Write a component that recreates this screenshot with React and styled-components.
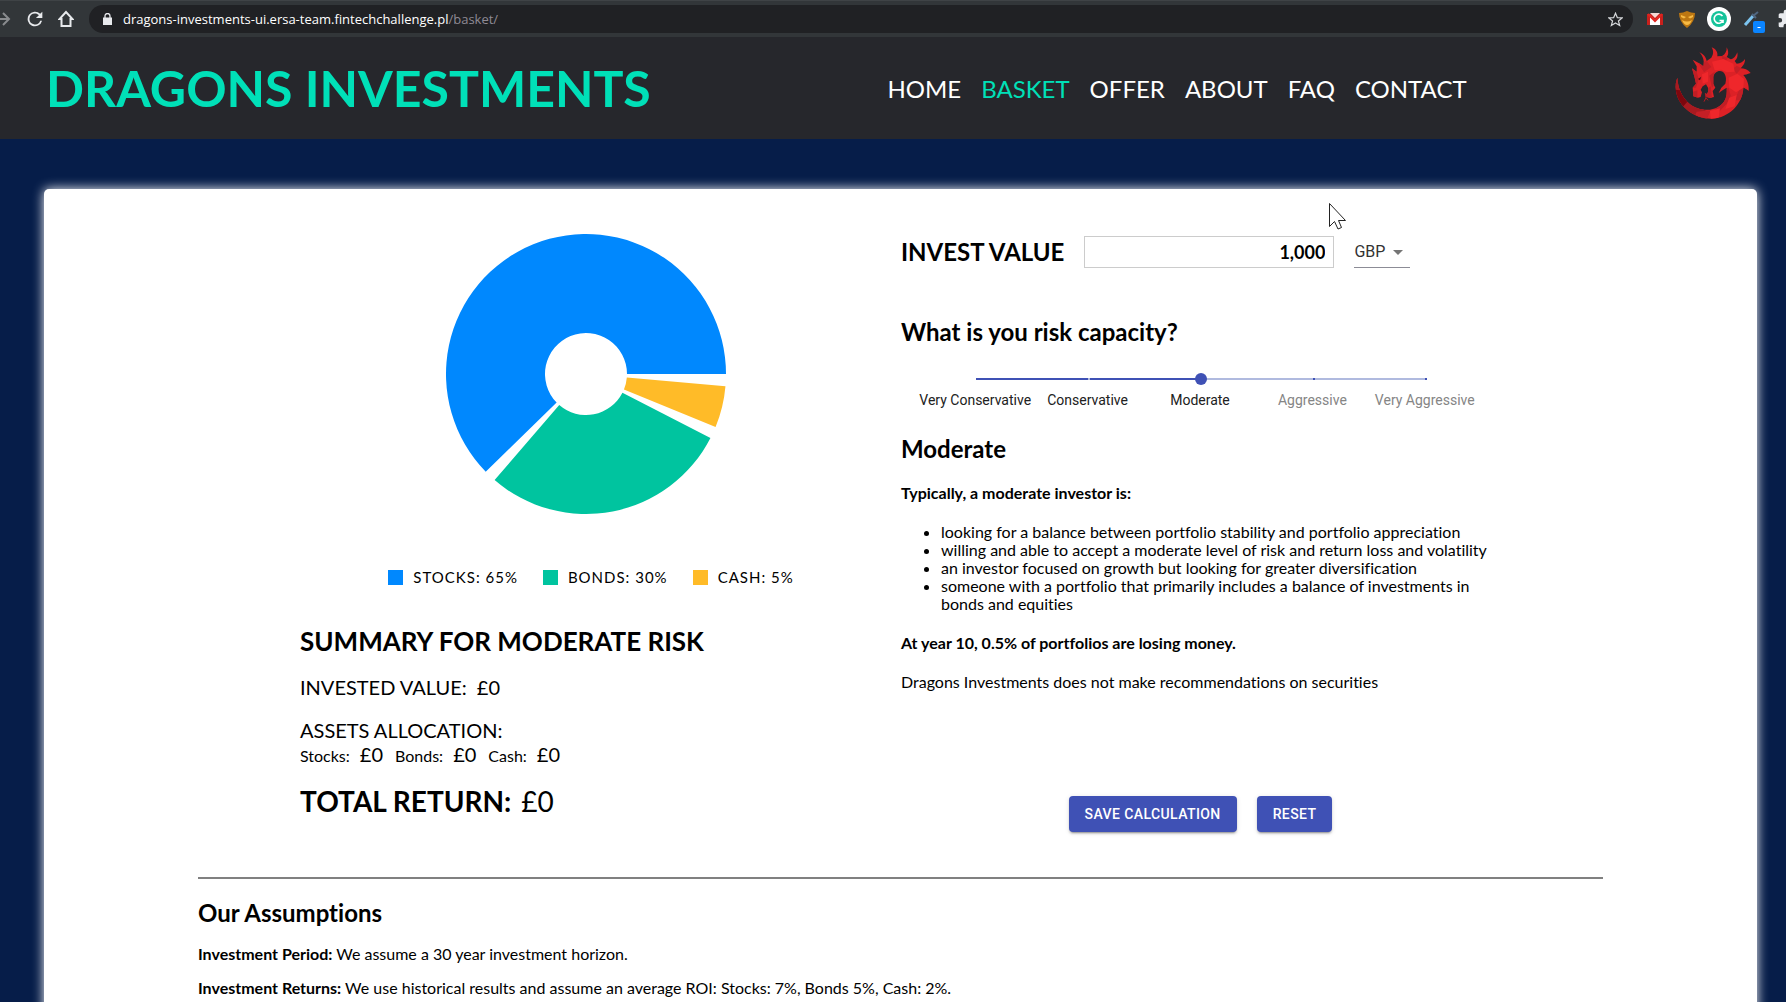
import React from 'react';
import styled, { createGlobalStyle } from 'styled-components';

const Global = createGlobalStyle`
  *, *::before, *::after { box-sizing: border-box; }
  body {
    margin: 0; font-family: Lato, "Noto Sans", sans-serif; font-size: 16px; color: #000; background: #061d49;
    font-variant-ligatures: none;
  }
  h1, h2, h3, p, ul { margin: 0; font-weight: 400; }
`;

const Bar = styled.div`
  display: flex; align-items: center; height: 37px; overflow: hidden;
  background: #323639; border-top: 1px solid #3f4346; color: #e8eaed;
`;
const NavButtons = styled.div`
  display: flex; align-items: center; gap: 12px; width: 89px; flex: none;
`;
const IconButton = styled.button`
  display: flex; align-items: center; justify-content: center; flex: none;
  width: ${(p) => p.$w || 20}px; height: 28px; padding: 0; border: 0; background: none; color: inherit;
`;
const Address = styled.div`
  display: flex; align-items: center; gap: 11px; flex: 1; height: 28px;
  padding: 0 10px 0 14px; border-radius: 14px; background: #202124;
`;
const Url = styled.span`
  flex: 1; font: 13px/20px "Open Sans", "Noto Sans", sans-serif; color: #fff;
`;
const UrlPath = styled.span`color: #8f8a94;`;
const Extensions = styled.div`
  display: flex; align-items: center; gap: 8px; width: 153px; padding-left: 10px; flex: none; overflow: hidden;
`;

const Header = styled.header`
  display: flex; align-items: center; height: 102px; padding: 0 35px 0 46px; background: #26272c;
`;
const Brand = styled.h1`
  flex: 0 0 49%; font-size: 50px; line-height: 60px; font-weight: 700; color: #00e0b8; white-space: nowrap;
`;
const Nav = styled.nav`display: flex; gap: 20px; flex: 1; padding: 2px 0 0 6px;`;
const NavLink = styled.a`
  font-size: 24px; line-height: 30px; text-decoration: none; color: ${(p) => (p.$active ? '#00e0b8' : '#fff')};
`;
const Logo = styled.svg`flex: none; align-self: flex-start; margin-top: 10px;`;

const Card = styled.main`
  margin: 50px 29px 0 44px; padding: 45px 154px 0; background: #fff;
  border-radius: 5px 5px 0 0; box-shadow: 0 0 12px #fff;
`;
const Columns = styled.div`
  display: grid; grid-template-columns: 600px minmax(0, 1fr); padding-left: 102px;
  padding-bottom: 45px; border-bottom: 2px solid #808080;
`;
const Left = styled.section`display: flex; flex-direction: column;`;
const Chart = styled.figure`
  display: flex; flex-direction: column; align-items: center; gap: 51px; margin: 0; padding-right: 28px;
`;
const Legend = styled.figcaption`
  display: flex; gap: 25px; padding-left: 10px; font-size: 15px; line-height: 24px; letter-spacing: 1px;
`;
const LegendItem = styled.span`
  display: flex; align-items: center; gap: 10px;
  &::before { content: ''; width: 15px; height: 15px; background: ${(p) => p.$color}; }
`;
const Summary = styled.div`padding: 36px 0 14px;`;
const Title = styled.h2`font-size: 26px; line-height: 32px; font-weight: 700;`;
const Line = styled.p`
  font-size: ${(p) => p.$size || 20}px; line-height: ${(p) => p.$lh || 24}px; padding-top: ${(p) => p.$top || 0}px;
  font-weight: ${(p) => (p.$bold ? 700 : 400)};
`;
const Amount = styled.span`font-size: ${(p) => p.$size || 20}px; font-weight: 400; margin: 0 12px 0 10px;`;

const Right = styled.section`display: flex; flex-direction: column; max-width: 600px; padding-left: 1px;`;
const InvestRow = styled.div`display: flex; align-items: center; gap: 20px; padding-top: 2px; margin-bottom: 48px;`;
const InvestLabel = styled.label`font-size: 24px; line-height: 32px; font-weight: 700;`;
const ValueInput = styled.input`
  width: 250px; height: 32px; padding: 0 8px; border: 1px solid #ccc; outline: 0; text-align: right;
  font: 700 18px/24px Lato, sans-serif; color: #000;
`;
const SelectWrap = styled.div`
  position: relative; width: 56px; border-bottom: 1px solid #8c8c96;
  &::after {
    content: ''; position: absolute; right: 7px; top: 14px; pointer-events: none;
    border: 5px solid transparent; border-top-color: #757575; border-bottom: 0;
  }
`;
const Currency = styled.select`
  appearance: none; width: 100%; height: 31px; padding: 0; border: 0; background: none; outline: 0;
  font: 16px/24px Roboto, sans-serif; color: #333;
`;
const Heading = styled.h2`font-size: 24px; line-height: 32px; font-weight: 700;`;
const Risk = styled.div`padding: 25px 0 23px 18px;`;
const Range = styled.input`
  display: block; appearance: none; width: 462px; height: 12px; margin: 0 0 0 51px; background:
    linear-gradient(#b0badf, #b0badf) 118px 5px / 2px 2px no-repeat,
    linear-gradient(#3f51b5, #3f51b5) 343px 5px / 2px 2px no-repeat,
    linear-gradient(#3f51b5, #3f51b5) 455px 5px / 2px 2px no-repeat,
    linear-gradient(90deg, #3f51b5 50%, #b0badf 50%) 6px 5px / 450px 2px no-repeat;
  &::-webkit-slider-thumb { appearance: none; width: 12px; height: 12px; border-radius: 50%; background: #3f51b5; }
`;
const Marks = styled.div`
  display: grid; grid-template-columns: repeat(5, 1fr); width: 562px; padding-top: 5px;
  font: 14px/20px Roboto, sans-serif; text-align: center; white-space: nowrap;
`;
const Mark = styled.span`color: ${(p) => (p.$off ? '#858585' : '#212121')};`;
const Copy = styled.p`font-size: 16px; line-height: 18px; padding-top: ${(p) => p.$top || 21}px; font-weight: ${(p) => (p.$bold ? 700 : 400)};`;
const Traits = styled.ul`
  padding: 21px 0 0 40px; font-size: 16px; line-height: 18px;
`;
const Actions = styled.div`display: flex; justify-content: center; gap: 20px; margin-top: auto;`;
const Button = styled.button`
  height: 36px; padding: 0 16px; border: 0; border-radius: 4px; background: #3f51b5; color: #fff;
  font: 500 14px/24px Roboto, sans-serif; letter-spacing: 0.4px;
  box-shadow: 0 3px 1px -2px rgba(0,0,0,.2), 0 2px 2px rgba(0,0,0,.14), 0 1px 5px rgba(0,0,0,.12);
`;
const Assumptions = styled.section`
  display: flex; flex-direction: column; gap: 16px; padding: 18px 0 40px;
`;
const Assumption = styled.p`font-size: 16px; line-height: 18px;`;

const Cursor = styled.svg`position: absolute; left: 1328px; top: 202px; pointer-events: none;`;

const DATA = [
  { name: 'STOCKS', value: 65, color: '#0088fe' },
  { name: 'BONDS', value: 30, color: '#00c49f' },
  { name: 'CASH', value: 5, color: '#ffbb28' },
];

function point(r, deg) {
  const a = (deg * Math.PI) / 180;
  return `${140 + r * Math.cos(a)} ${140 - r * Math.sin(a)}`;
}

function Pie() {
  const pad = 5;
  let start = 0;
  return (
    <svg width="280" height="280" viewBox="0 0 280 280" role="img" aria-label="Portfolio allocation">
      {DATA.map((d) => {
        const sweep = ((360 - pad * DATA.length) * d.value) / 100;
        const end = start + sweep;
        const large = sweep > 180 ? 1 : 0;
        const path = `M${point(140, start)} A140 140 0 ${large} 0 ${point(140, end)} L${point(41, end)} A41 41 0 ${large} 1 ${point(41, start)} Z`;
        start = end + pad;
        return <path key={d.name} d={path} fill={d.color} />;
      })}
    </svg>
  );
}

const DRAGON_BODY =
  'M292 232C294 262 304 290 330 312C352 330 392 334 414 320C434 308 442 292 440 262L430 268L416 278L424 262L436 250C440 236 438 222 428 214C416 208 402 216 400 230L400 250L406 262L398 272L402 290L390 293L380 290L376 284L384 276L384 262L378 252L368 258L362 268L366 276L362 290L354 292L340 288L338 262L348 250L344 232L336 204L350 214L350 198L338 178L360 190L370 198C374 184 370 168 358 156C372 162 378 172 380 182L394 172C402 160 400 150 395 141C408 146 414 156 412 168L426 167C436 162 441 152 440 141C446 152 446 164 440 170L452 177C462 176 468 166 472 156C474 168 472 176 464 182L470 190C482 190 490 184 495 176C496 188 488 198 482 204C492 204 504 208 512 218C502 222 494 224 490 224C500 236 508 252 506 272C500 266 494 262 490 262C488 310 448 352 396 355C346 356 296 322 288 272C285 254 288 242 292 232Z';

function Dragon() {
  return (
    <Logo width="76" height="72" viewBox="285 140 228 216" role="img" aria-label="Dragon logo">
      <clipPath id="dragon-body"><path d={DRAGON_BODY} /></clipPath>
      <path fill="#dc2126" d={DRAGON_BODY} />
      <g clipPath="url(#dragon-body)">
        <path fill="#c01e25" d="M334 200L350 214L356 236L348 262L336 262ZM388 226L404 214L404 250L396 262ZM336 276L352 270L352 294L336 294ZM384 264L392 258L396 294L376 292Z" />
        <path fill="#a81a20" d="M284 226L300 226L340 312L380 332L362 358L312 336L284 280Z" />
        <path fill="#c01e25" d="M430 270L446 262L452 286L440 310L416 336L404 326L432 304Z" />
        <path fill="#7d070e" d="M284 268L300 270L322 304L306 322L288 296Z" />
        <path fill="#c41f26" d="M356 190L380 182L394 200L372 216ZM424 166L444 172L432 190ZM470 196L484 204L470 220L458 206ZM480 262L500 262L486 300L464 300ZM350 334L392 330L380 358L342 352Z" />
        <path fill="#ef272b" d="M396 184L430 176L460 190L464 214L440 216L424 208L404 210ZM446 232L472 220L492 236L490 262L468 276L448 262ZM448 292L470 284L464 318L436 326ZM390 332L420 324L416 352L392 356ZM366 222L384 214L384 244L368 250Z" />
        <path fill="#4e0d13" d="M354 236L364 229L360 240Z" />
      </g>
      <path fill="none" stroke="#b01c23" strokeWidth="3" d="M376 278L378 292L372 304M378 292L384 300" />
    </Logo>
  );
}

export default function App() {
  return (
    <>
      <Global />
      <Bar>
        <NavButtons>
          <IconButton aria-label="Forward" $w={12}>
            <svg width="12" height="16" viewBox="0 0 12 16" fill="none" stroke="#898b8e" strokeWidth="2"><path d="M0 8H9M3 2L9 8L3 14" /></svg>
          </IconButton>
          <IconButton aria-label="Reload" $w={22}>
            <svg width="22" height="22" viewBox="0 0 24 24" fill="currentColor"><path d="M17.65 6.35A8 8 0 1 0 19.73 14h-2.08A6 6 0 1 1 12 6c1.66 0 3.14.69 4.22 1.78L13 11h7V4z" /></svg>
          </IconButton>
          <IconButton aria-label="Home" $w={16}>
            <svg width="16" height="18" viewBox="0 0 16 18" fill="none" stroke="currentColor" strokeWidth="2"><path d="M8 2L1.500 9H3.500V16H12.500V9H14.500Z" /></svg>
          </IconButton>
        </NavButtons>
        <Address>
          <svg width="9" height="12" viewBox="0 0 9 12"><path d="M0 4.500H9V12H0Z" fill="#e8eaed" /><path d="M2 5V3A2.500 2.500 0 0 1 7 3V5" fill="none" stroke="#e8eaed" strokeWidth="1.300" /></svg>
          <Url>dragons-investments-ui.ersa-team.fintechchallenge.pl<UrlPath>/basket/</UrlPath></Url>
          <IconButton aria-label="Bookmark" $w={16}>
            <svg width="15" height="15" viewBox="0 0 24 24" fill="none" stroke="#d5d7da" strokeWidth="2"><path d="M12 2L15 9L22.500 9.500L16.700 14.300L18.600 21.500L12 17.500L5.400 21.500L7.300 14.300L1.500 9.500L9 9Z" /></svg>
          </IconButton>
        </Address>
        <Extensions>
          <IconButton aria-label="Mail" $w={24}>
            <svg width="16" height="13" viewBox="0 0 16 13"><path d="M0 1H16V12H0Z" fill="#c9201c" /><path d="M3 2L8 7L13 2V12H3Z" fill="#fff" /><path d="M3 0H13L8 5Z" fill="#f6d9d5" /><path d="M1 1L8 8L15 1" fill="none" stroke="#e0231f" strokeWidth="2" /></svg>
          </IconButton>
          <IconButton aria-label="Mask" $w={24}>
            <svg width="16" height="17" viewBox="0 0 16 17"><path d="M0 2Q4 2 8 0Q12 2 16 2Q16 11 8 17Q0 11 0 2Z" fill="#bd7712" /><path d="M2 4L7 6L5 7.500L2 6ZM14 4L9 6L11 7.500L14 6ZM3 9Q8 12 13 9Q11 14 8 14Q5 14 3 9Z" fill="#f8ba43" /></svg>
          </IconButton>
          <IconButton aria-label="Writing assistant" $w={24}>
            <svg width="24" height="24" viewBox="0 0 24 24"><circle cx="12" cy="12" r="12" fill="#fff" /><circle cx="12" cy="12" r="8" fill="#15c39a" /><path d="M15.500 9A4.600 4.600 0 1 0 16 13.500H12.500M16 13V16" fill="none" stroke="#fff" strokeWidth="1.600" /></svg>
          </IconButton>
          <IconButton aria-label="Colour picker" $w={30}>
            <svg width="22" height="28" viewBox="0 0 22 28"><path d="M2 20L10 11" stroke="#7cc4f0" strokeWidth="3" /><path d="M9 9L13 13M10 11L15 7" stroke="#506680" strokeWidth="2" /><rect x="10" y="16" width="12" height="12" rx="2" fill="#0a84ff" /><path d="M14.500 22.500H17.500" stroke="#fff" /></svg>
          </IconButton>
          <IconButton aria-label="Extensions" $w={20}>
            <svg width="20" height="20" viewBox="0 0 24 24" fill="currentColor"><path d="M20.500 11H19V7a2 2 0 0 0-2-2h-4V3.500a2.500 2.500 0 0 0-5 0V5H4a2 2 0 0 0-2 2v3.800h1.500a2.700 2.700 0 0 1 0 5.400H2V20a2 2 0 0 0 2 2h3.800v-1.500a2.700 2.700 0 0 1 5.400 0V22H17a2 2 0 0 0 2-2v-4h1.500a2.500 2.500 0 0 0 0-5z" /></svg>
          </IconButton>
        </Extensions>
      </Bar>

      <Header>
        <Brand>DRAGONS INVESTMENTS</Brand>
        <Nav>
          {['HOME', 'BASKET', 'OFFER', 'ABOUT', 'FAQ', 'CONTACT'].map((n) => (
            <NavLink key={n} href={`#${n.toLowerCase()}`} $active={n === 'BASKET'}>{n}</NavLink>
          ))}
        </Nav>
        <Dragon />
      </Header>

      <Card>
        <Columns>
          <Left>
            <Chart>
              <Pie />
              <Legend>
                {DATA.map((d) => <LegendItem key={d.name} $color={d.color}>{d.name}: {d.value}%</LegendItem>)}
              </Legend>
            </Chart>
            <Summary>
              <Title>SUMMARY FOR MODERATE RISK</Title>
              <Line $top={18}>INVESTED VALUE:<Amount>£0</Amount></Line>
              <Line $top={19}>ASSETS ALLOCATION:</Line>
              <Line $size={16}>
                Stocks:<Amount>£0</Amount>Bonds:<Amount>£0</Amount>Cash:<Amount>£0</Amount>
              </Line>
              <Line $size={28} $lh={34} $top={16} $bold>TOTAL RETURN:<Amount $size={28}>£0</Amount></Line>
            </Summary>
          </Left>
          <Right>
            <InvestRow>
              <InvestLabel htmlFor="value">INVEST VALUE</InvestLabel>
              <ValueInput id="value" defaultValue="1,000" />
              <SelectWrap>
                <Currency aria-label="Currency" defaultValue="GBP"><option>GBP</option></Currency>
              </SelectWrap>
            </InvestRow>
            <Heading as="label" htmlFor="risk">What is you risk capacity?</Heading>
            <Risk>
              <Range id="risk" type="range" min="0" max="4" defaultValue="2" />
              <Marks>
                {['Very Conservative', 'Conservative', 'Moderate', 'Aggressive', 'Very Aggressive'].map((m, i) => (
                  <Mark key={m} $off={i > 2}>{m}</Mark>
                ))}
              </Marks>
            </Risk>
            <Heading>Moderate</Heading>
            <Copy $bold $top={19}>Typically, a moderate investor is:</Copy>
            <Traits>
              <li>looking for a balance between portfolio stability and portfolio appreciation</li>
              <li>willing and able to accept a moderate level of risk and return loss and volatility</li>
              <li>an investor focused on growth but looking for greater diversification</li>
              <li>someone with a portfolio that primarily includes a balance of investments in bonds and equities</li>
            </Traits>
            <Copy $bold>At year 10, 0.5% of portfolios are losing money.</Copy>
            <Copy>Dragons Investments does not make recommendations on securities</Copy>
            <Actions>
              <Button type="button">SAVE CALCULATION</Button>
              <Button type="button">RESET</Button>
            </Actions>
          </Right>
        </Columns>
        <Assumptions>
          <Heading>Our Assumptions</Heading>
          <Assumption><b>Investment Period:</b> We assume a 30 year investment horizon.</Assumption>
          <Assumption><b>Investment Returns:</b> We use historical results and assume an average ROI: Stocks: 7%, Bonds 5%, Cash: 2%.</Assumption>
        </Assumptions>
      </Card>
      <Cursor width="18" height="28" viewBox="0 0 18 28"><path d="M1.500 1.500V24.500L6.500 19.500L10 27L13.500 25.500L10.500 18.500H17.500Z" fill="#fff" stroke="#222" /></Cursor>
    </>
  );
}
